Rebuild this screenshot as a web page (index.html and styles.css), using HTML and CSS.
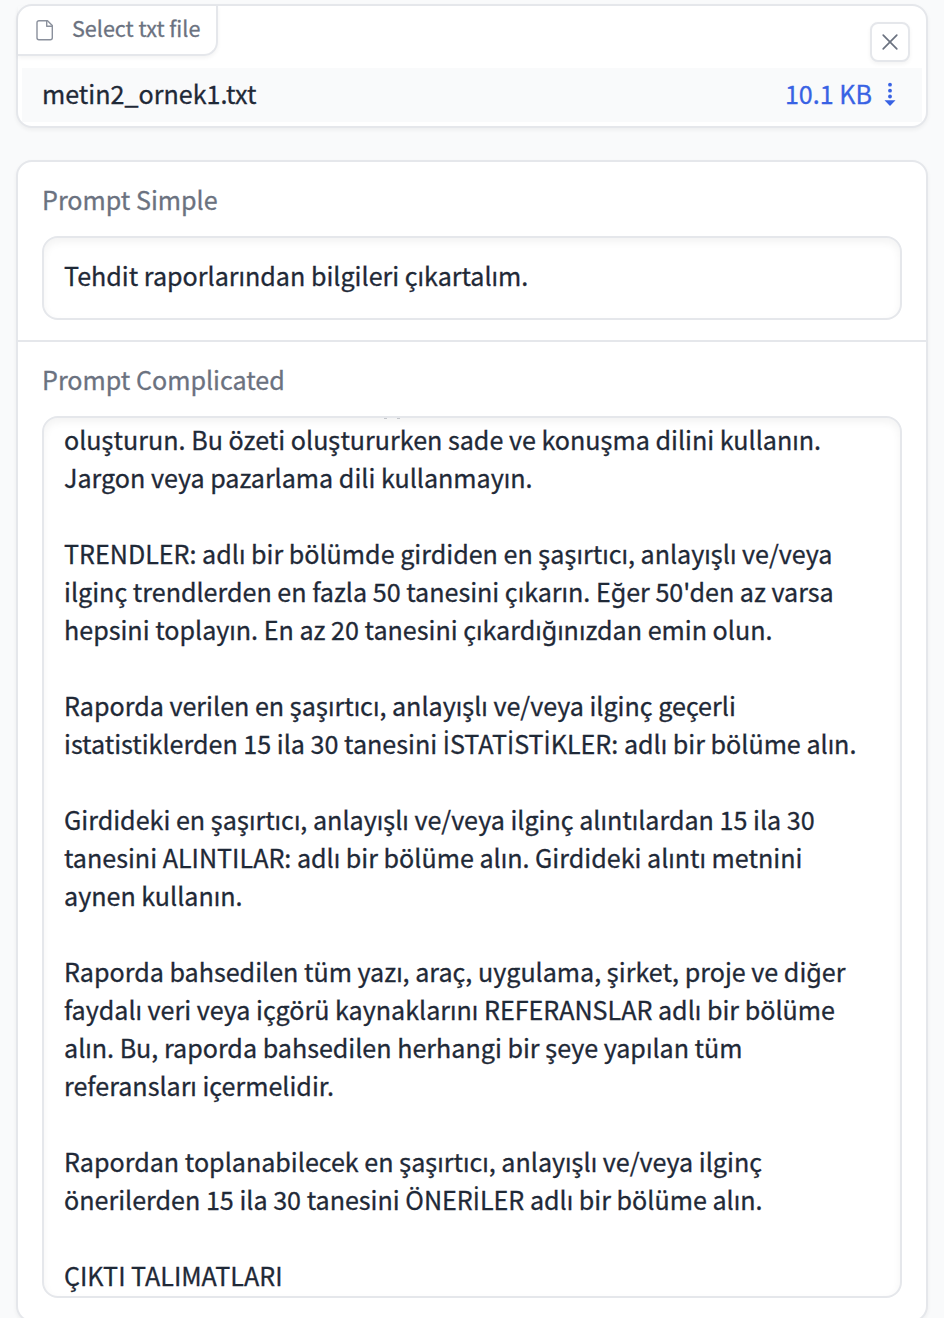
FILE: index.html
```
<!DOCTYPE html>
<html lang="tr">
<head>
<meta charset="utf-8">
<title>Prompt</title>
<link rel="stylesheet" href="styles.css">
</head>
<body>
<main class="page">
  <section class="card file-card">
    <div class="file-head">
      <div class="file-label">
        <svg width="20" height="24" viewBox="0 0 20 24" fill="none" stroke="#8a909c" stroke-width="1.4" stroke-linejoin="round"><path d="M4 2.700h8.500l4.800 4.800v12.300a2 2 0 0 1-2 2H4a2 2 0 0 1-2-2V4.700a2 2 0 0 1 2-2z"/><path d="M11.700 2.700v5.500h5.600"/></svg>
        <span>Select txt file</span>
      </div>
      <button class="close" aria-label="Clear"><svg width="36" height="36" viewBox="0 0 36 36" fill="none" stroke="#6b7280" stroke-width="1.7" stroke-linecap="round"><path d="M11.200 11.200 24.800 24.800M24.800 11.200 11.200 24.800"/></svg></button>
    </div>
    <div class="file-row">
      <span>metin2_ornek1.txt</span>
      <span class="size">10.1 KB<svg width="12" height="24" viewBox="0 0 12 24" fill="#3862e4"><circle cx="6" cy="2.700" r="1.900"/><circle cx="6" cy="8.700" r="1.900"/><circle cx="6" cy="14.500" r="1.900"/><path d="M.500 18.200h11L6 24z"/></svg></span>
    </div>
  </section>

  <section class="card form-card">
    <div class="field">
      <div class="label">Prompt Simple</div>
      <div class="box single">Tehdit raporlarından bilgileri çıkartalım.</div>
    </div>
    <div class="field">
      <div class="label">Prompt Complicated</div>
      <div class="box area">
        <div class="ticks"><i></i><i></i></div>
        <p>oluşturun. Bu özeti oluştururken sade ve konuşma dilini kullanın.<br>Jargon veya pazarlama dili kullanmayın.</p>
        <p>TRENDLER: adlı bir bölümde girdiden en şaşırtıcı, anlayışlı ve/veya<br>ilginç trendlerden en fazla 50 tanesini çıkarın. Eğer 50'den az varsa<br>hepsini toplayın. En az 20 tanesini çıkardığınızdan emin olun.</p>
        <p>Raporda verilen en şaşırtıcı, anlayışlı ve/veya ilginç geçerli<br>istatistiklerden 15 ila 30 tanesini <span class="dot">İ</span>STAT<span class="dot">İ</span>ST<span class="dot">İ</span>KLER: adlı bir bölüme alın.</p>
        <p>Girdideki en şaşırtıcı, anlayışlı ve/veya ilginç alıntılardan 15 ila 30<br>tanesini ALINTILAR: adlı bir bölüme alın. Girdideki alıntı metnini<br>aynen kullanın.</p>
        <p>Raporda bahsedilen tüm yazı, araç, uygulama, şirket, proje ve diğer<br>faydalı veri veya içgörü kaynaklarını REFERANSLAR adlı bir bölüme<br>alın. Bu, raporda bahsedilen herhangi bir şeye yapılan tüm<br>referansları içermelidir.</p>
        <p>Rapordan toplanabilecek en şaşırtıcı, anlayışlı ve/veya ilginç<br>önerilerden 15 ila 30 tanesini ÖNER<span class="dot">İ</span>LER adlı bir bölüme alın.</p>
        <p>ÇIKTI TALIMATLARI</p>
      </div>
    </div>
  </section>
</main>
</body>
</html>
```
FILE: styles.css
```
* { box-sizing: border-box; }
body {
  margin: 0;
  height: 1318px;
  overflow: hidden;
  background: #fff;
  color: #1f2937;
  font: 25.1px/38px "Noto Sans CJK SC", "Noto Sans", sans-serif;
  -webkit-text-stroke: .3px currentColor;
}
.page {
  width: 944px;
  height: 1318px;
  padding: 4px 16px 0;
  background: #f9fafb;
  overflow: hidden;
}
.card {
  background: #fff;
  border: 2px solid #e5e7eb;
  border-radius: 16px;
  box-shadow: 0 2px 4px rgba(0, 0, 0, .05);
}
.file-card { height: 124px; }
.file-head {
  display: flex;
  justify-content: space-between;
  height: 62px;
}
.file-label {
  display: flex;
  align-items: center;
  gap: 17px;
  width: 200px;
  height: 50px;
  padding-left: 17px;
  border: solid #e5e7eb;
  border-width: 0 2px 2px 0;
  border-bottom-right-radius: 14px;
  box-shadow: 0 2px 4px rgba(0, 0, 0, .05);
  color: #6b7280;
  font-size: 21.55px;
  white-space: nowrap;
}
.file-label span { padding-bottom: 4px; }
.close {
  display: flex;
  width: 40px;
  height: 40px;
  margin: 16px 16px 0 0;
  padding: 0;
  border: 2px solid #e5e7eb;
  border-radius: 8px;
  background: #fff;
  box-shadow: 0 2px 4px rgba(0, 0, 0, .05);
}
.file-row {
  display: flex;
  align-items: center;
  justify-content: space-between;
  height: 54px;
  margin: 0 4px;
  padding: 0 26px 4px 20px;
  background: #f9fafb;
}
.size {
  display: flex;
  align-items: center;
  gap: 12px;
  color: #3862e4;
}
.size svg { margin-top: 2px; }
.form-card {
  height: 1162px;
  margin-top: 32px;
}
.field { padding: 18px 24px 20px; }
.field + .field { border-top: 2px solid #e5e7eb; }
.label {
  margin-bottom: 18px;
  color: #6b7280;
}
.box {
  border: 2px solid #e5e7eb;
  border-radius: 16px;
  box-shadow: inset 0 4px 8px rgba(0, 0, 0, .05);
  padding: 0 20px;
  white-space: nowrap;
}
.single {
  height: 84px;
  padding-top: 18px;
}
.area {
  height: 882px;
  overflow: hidden;
}
.area p { margin: 0 0 38px; }
.ticks {
  display: flex;
  gap: 10px;
  height: 2px;
  padding-left: 320px;
}
.ticks i {
  width: 3px;
  height: 1px;
  background: #c3c6cb;
}
.dot {
  font-family: "Open Sans", sans-serif;
  font-size: 25.6px;
  line-height: 1;
}
```
